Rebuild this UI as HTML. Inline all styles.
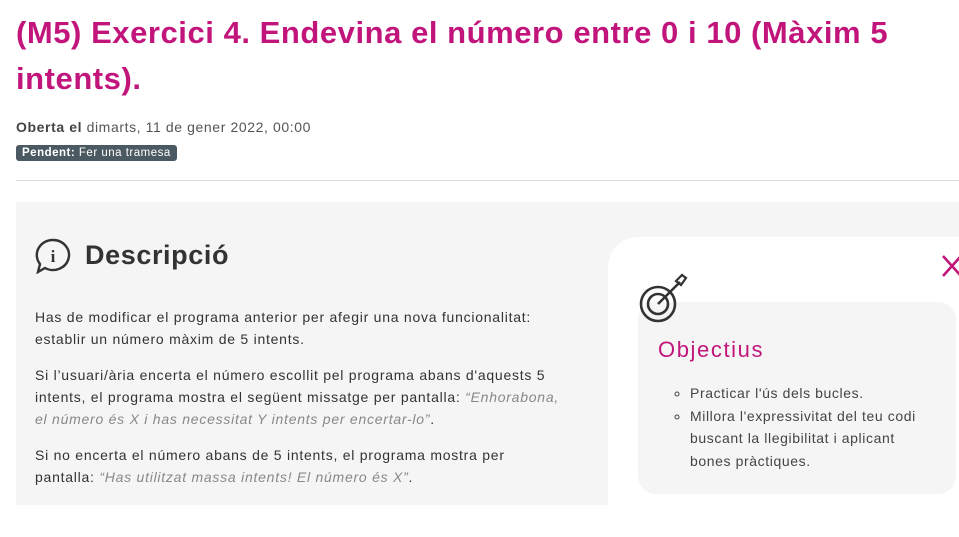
<!DOCTYPE html>
<html><head><meta charset="utf-8"><style>
*{margin:0;padding:0;box-sizing:border-box}
body{width:959px;height:505px;overflow:hidden;background:#fff;font-family:"Liberation Sans",sans-serif;color:#333;position:relative}
h1{position:absolute;left:16px;top:10px;width:930px;font-size:31px;line-height:46px;color:#c2157c;font-weight:bold;letter-spacing:0.55px}
.meta{position:absolute;left:16px;top:119px;font-size:14px;color:#555;letter-spacing:0.6px}
.meta b{color:#444}
.badge{position:absolute;left:16px;top:145px;height:16px;background:#4b5962;color:#fff;font-size:11.5px;line-height:16px;padding:0 6px;border-radius:3px;letter-spacing:0.5px}
hr{position:absolute;left:16px;top:180px;width:943px;border:0;border-top:1px solid #ddd}
.panel{position:absolute;left:16px;top:202px;width:943px;height:303px;background:#f5f5f5}
.desc{position:absolute;left:85px;top:240px;font-size:27px;color:#333;font-weight:bold;letter-spacing:0.6px}
.txt{position:absolute;left:35px;width:570px;font-size:14px;line-height:22px;color:#333;letter-spacing:0.75px;white-space:nowrap}
.txt i{color:#888}
.card{position:absolute;left:608px;top:237px;width:380px;height:300px;background:#fff;border-radius:30px}
.inner{position:absolute;left:638px;top:302px;width:318px;height:192px;background:#f5f5f5;border-radius:18px}
.obj{position:absolute;left:658px;top:337px;font-size:22px;color:#c2157c;letter-spacing:1.6px}
ul{position:absolute;left:690px;top:382px;width:240px;font-size:14px;line-height:22.5px;color:#444;list-style:circle;letter-spacing:0.6px}
</style></head><body>
<h1>(M5) Exercici 4. Endevina el número entre 0 i 10 (Màxim 5 intents).</h1>
<div class="meta"><b>Oberta el</b> dimarts, 11 de gener 2022, 00:00</div>
<div class="badge"><b>Pendent:</b> Fer una tramesa</div>
<hr>
<div class="panel"></div>
<svg style="position:absolute;left:35px;top:238px" width="36" height="36" viewBox="0 0 36 36"><path d="M18 2a16 15 0 1 1-8 28l-7 4 2-8A16 15 0 0 1 18 2z" fill="none" stroke="#333" stroke-width="2.4"/><text x="18" y="24" text-anchor="middle" font-family="Liberation Serif" font-size="17" font-weight="bold" fill="#333">i</text></svg>
<div class="desc">Descripció</div>
<div class="txt" style="top:306px">Has de modificar el programa anterior per afegir una nova funcionalitat:<br>establir un número màxim de 5 intents.</div>
<div class="txt" style="top:364px">Si l’usuari/ària encerta el número escollit pel programa abans d'aquests 5<br>intents, el programa mostra el següent missatge per pantalla: <i>“Enhorabona,<br>el número és X i has necessitat Y intents per encertar-lo”</i>.</div>
<div class="txt" style="top:444px">Si no encerta el número abans de 5 intents, el programa mostra per<br>pantalla: <i>“Has utilitzat massa intents! El número és X”</i>.</div>
<div class="card"></div>
<div class="inner"></div>
<svg style="position:absolute;left:940px;top:253px" width="22" height="26"><path d="M3 3l18 20M21 3L3 23" stroke="#c2157c" stroke-width="2.6"/></svg>
<svg style="position:absolute;left:636px;top:273px" width="54" height="52" viewBox="0 0 54 52"><circle cx="22" cy="31" r="17" fill="none" stroke="#333" stroke-width="2.6"/><circle cx="22" cy="31" r="10" fill="none" stroke="#333" stroke-width="2.6"/><path d="M22 31L44 9" stroke="#333" stroke-width="2.6"/><path d="M40 8l6-6 4 3-5 7z" fill="none" stroke="#333" stroke-width="2.2"/></svg>
<div class="obj">Objectius</div>
<ul><li>Practicar l'ús dels bucles.</li><li>Millora l'expressivitat del teu codi buscant la llegibilitat i aplicant bones pràctiques.</li></ul>
</body></html>
